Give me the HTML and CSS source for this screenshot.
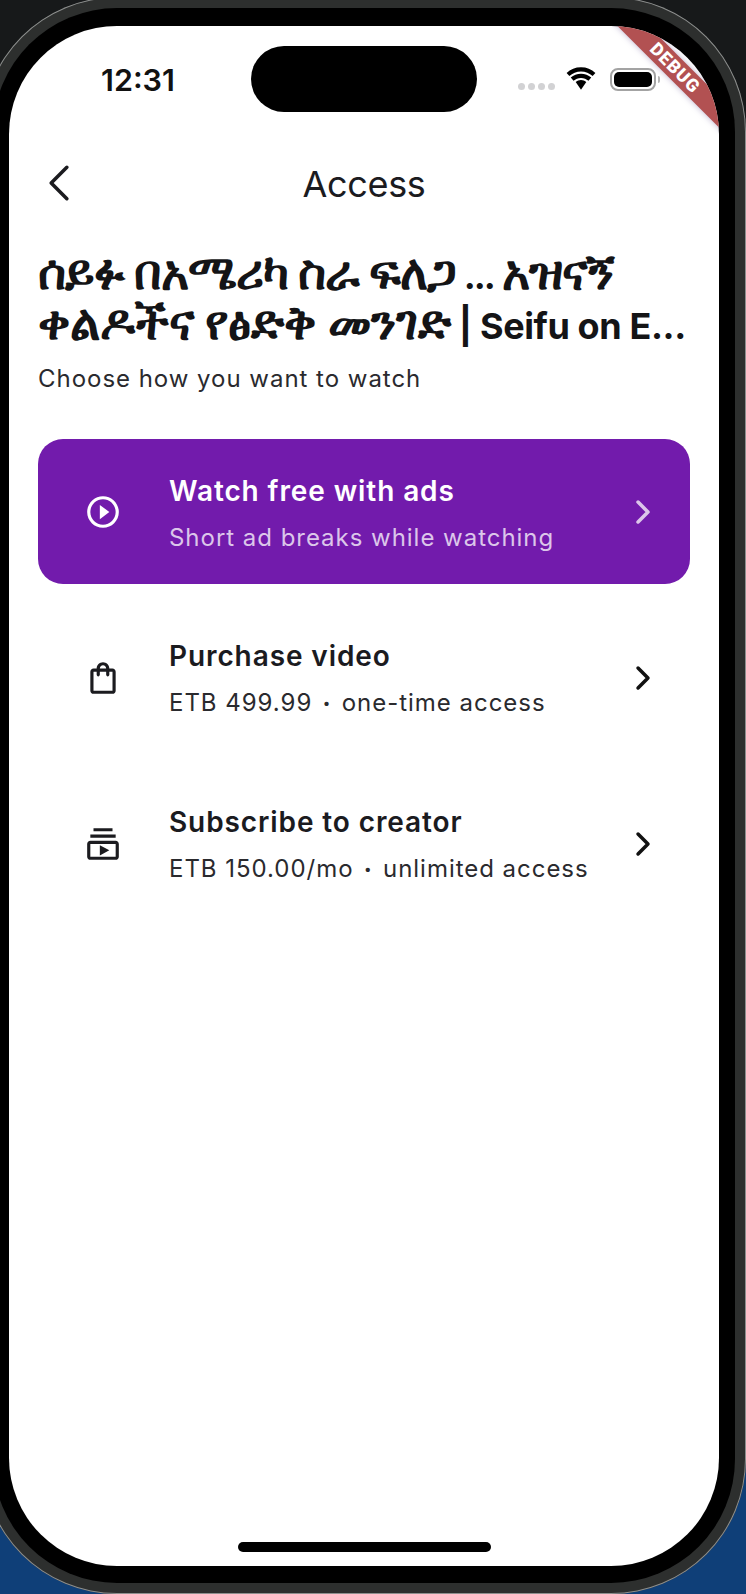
FILE: index.html
```html
<!DOCTYPE html>
<html lang="en">
<head>
  <meta charset="UTF-8">
  <meta name="viewport" content="width=device-width, initial-scale=1.0">
  <title>Access</title>
  <link rel="stylesheet" href="styles.css">
</head>
<body>
  <div class="frame">
    <div class="bezel">
      <div class="screen">
        <div class="debug-banner">DEBUG</div>

        <div class="status-bar">
          <span class="time">12:31</span>
          <div class="island"></div>
          <div class="status-icons">
            <div class="signal"><i></i><i></i><i></i><i></i></div>
            <svg class="wifi" viewBox="0 0 30 24">
              <path d="M15 5c4.200 0 8 1.600 10.900 4.300l2.600-3C24.900 2.900 20.200 1 15 1S5.100 2.900 1.500 6.300l2.600 3C7 6.600 10.800 5 15 5z"/>
              <path d="M15 11c2.700 0 5.100 1 7 2.700l2.600-3C22 8.400 18.700 7 15 7s-7 1.400-9.600 3.700l2.600 3C9.900 12 12.300 11 15 11z"/>
              <path d="M15 13c-1.900 0-3.600.7-5 1.900l5 7.100 5-7.100c-1.400-1.200-3.100-1.900-5-1.900z"/>
            </svg>
            <div class="battery"><div class="battery-level"></div></div>
            <div class="battery-cap"></div>
          </div>
        </div>

        <div class="app-bar">
          <svg class="back" viewBox="0 0 22 36"><path d="M19 3L4 18l15 15"/></svg>
          <div class="app-title">Access</div>
        </div>

        <div class="content">
          <h1 class="video-title">
            <span class="line"><span class="ge">ሰይፉ በአሜሪካ ስራ ፍለጋ</span> <span class="dots">...</span> <span class="ge">አዝናኝ</span></span>
            <span class="line"><span class="ge wide">ቀልዶችና የፅድቅ መንገድ</span> | Seifu on E...</span>
          </h1>
          <p class="subtitle">Choose how you want to watch</p>

          <div class="options">
            <div class="option selected">
              <svg class="option-icon" viewBox="0 0 24 24"><path d="M10 16.500l6-4.500-6-4.500v9zM12 2C6.480 2 2 6.480 2 12s4.480 10 10 10 10-4.480 10-10S17.520 2 12 2zm0 18c-4.410 0-8-3.590-8-8s3.590-8 8-8 8 3.590 8 8-3.590 8-8 8z"/></svg>
              <div class="option-text">
                <div class="option-name">Watch free with ads</div>
                <div class="option-desc">Short ad breaks while watching</div>
              </div>
              <svg class="chevron" viewBox="0 0 24 24"><path d="M8.500 5L15.500 12l-7 7"/></svg>
            </div>

            <div class="option">
              <svg class="option-icon" viewBox="0 0 24 24"><path d="M18 6h-2c0-2.210-1.790-4-4-4S8 3.790 8 6H6c-1.100 0-2 .9-2 2v12c0 1.100.9 2 2 2h12c1.100 0 2-.9 2-2V8c0-1.100-.9-2-2-2zm-6-2c1.100 0 2 .9 2 2h-4c0-1.100.9-2 2-2zm6 16H6V8h2v2c0 .55.45 1 1 1s1-.45 1-1V8h4v2c0 .55.45 1 1 1s1-.45 1-1V8h2v12z"/></svg>
              <div class="option-text">
                <div class="option-name">Purchase video</div>
                <div class="option-desc">ETB 499.99 <span class="dot">•</span> one-time access</div>
              </div>
              <svg class="chevron" viewBox="0 0 24 24"><path d="M8.500 5L15.500 12l-7 7"/></svg>
            </div>

            <div class="option">
              <svg class="option-icon" viewBox="0 0 24 24"><path d="M4 6h16v2H4zm2-4h12v2H6zm14 8H4c-1.100 0-2 .9-2 2v8c0 1.100.9 2 2 2h16c1.100 0 2-.9 2-2v-8c0-1.100-.9-2-2-2zm0 10H4v-8h16v8zm-10-7.270v6.530L16 16z"/></svg>
              <div class="option-text">
                <div class="option-name">Subscribe to creator</div>
                <div class="option-desc">ETB 150.00/mo <span class="dot">•</span> unlimited access</div>
              </div>
              <svg class="chevron" viewBox="0 0 24 24"><path d="M8.500 5L15.500 12l-7 7"/></svg>
            </div>
          </div>
        </div>

        <div class="home-indicator"></div>
      </div>
    </div>
  </div>
</body>
</html>
```

FILE: styles.css
```css
html, body {
  margin: 0;
  height: 100%;
  overflow: hidden;
}
body {
  font-family: Inter, "Noto Sans", "DejaVu Sans", sans-serif;
  color: #1b1b1f;
  background: linear-gradient(180deg, #17191a 0%, #17191a 60%, #0f3f78 60%, #0f3f78 100%);
}
.frame {
  width: 764px;
  height: 1597px;
  margin-left: -18px;
  margin-top: -3px;
  box-sizing: border-box;
  padding: 11px;
  background: #2d2f2e;
  border-radius: 135px;
  box-shadow: inset 0 0 0 1px #8d8f8e;
}
.bezel {
  height: 100%;
  box-sizing: border-box;
  padding: 18px 16px 17px;
  background: #000;
  border-radius: 124px;
}
.screen {
  position: relative;
  height: 100%;
  display: flex;
  flex-direction: column;
  overflow: hidden;
  background: #fff;
  border-radius: 108px;
}

/* flutter debug ribbon */
.debug-banner {
  position: absolute;
  top: 31px;
  right: -56px;
  width: 200px;
  height: 22px;
  line-height: 22px;
  text-align: center;
  transform: rotate(45deg);
  background: #b25152;
  color: #fff;
  font-family: Roboto, sans-serif;
  font-weight: 900;
  font-size: 18px;
  letter-spacing: 1px;
  box-shadow: 0 0 6px rgba(70, 40, 120, 0.35);
}

.status-bar {
  display: flex;
  align-items: flex-start;
  height: 86px;
  padding-top: 20px;
  box-sizing: border-box;
  flex-shrink: 0;
}
.time {
  width: 242px;
  padding-left: 92px;
  box-sizing: border-box;
  margin-top: 17px;
  font-size: 30.5px;
  line-height: 34px;
  font-weight: 600;
  color: #111;
}
.island {
  width: 226px;
  height: 66px;
  background: #000;
  border-radius: 33px;
}
.status-icons {
  display: flex;
  align-items: center;
  margin-left: 41px;
  margin-top: 20px;
}
.signal {
  display: flex;
  gap: 3px;
  margin-top: 14px;
}
.signal i {
  width: 7px;
  height: 7px;
  border-radius: 50%;
  background: #d2d2d4;
}
.wifi {
  width: 32px;
  height: 26px;
  margin-left: 10px;
}
.battery {
  width: 46px;
  height: 23px;
  box-sizing: border-box;
  margin-left: 13px;
  padding: 2px;
  border: 2px solid #a3a3a3;
  border-radius: 8px;
}
.battery-level {
  height: 100%;
  background: #000;
  border-radius: 5px;
}
.battery-cap {
  width: 2px;
  height: 7px;
  margin-left: 2px;
  background: #b5b5b5;
  border-radius: 0 2px 2px 0;
}

.app-bar {
  position: relative;
  display: flex;
  align-items: center;
  justify-content: center;
  height: 70px;
  margin-top: 37px;
  flex-shrink: 0;
}
.back {
  position: absolute;
  left: 38px;
  top: 15px;
  width: 23px;
  height: 38px;
  fill: none;
  stroke: #1b1b1f;
  stroke-width: 3.4;
  stroke-linecap: round;
  stroke-linejoin: round;
}
.app-title {
  font-size: 36px;
  font-weight: 400;
  letter-spacing: -0.3px;
}

.content {
  padding: 0 29px;
}
.video-title {
  margin: 28px 0 0;
  font-size: 36px;
  line-height: 50px;
  font-weight: 700;
  letter-spacing: -0.4px;
  color: #141416;
}
.video-title .line {
  display: block;
  height: 50px;
  white-space: nowrap;
}
.video-title .ge {
  font-size: 48px;
  letter-spacing: -1.1px;
}
.video-title .ge.wide {
  letter-spacing: 0;
}
.video-title .dots {
  letter-spacing: -2px;
}
.subtitle {
  margin: 15px 0 0;
  font-size: 24px;
  line-height: 34px;
  letter-spacing: 0.97px;
  color: #2a2a2e;
}

.options {
  display: flex;
  flex-direction: column;
  gap: 21px;
  margin-top: 43px;
}
.option {
  display: flex;
  align-items: center;
  height: 145px;
  border-radius: 25px;
  padding: 0 30px 0 46px;
}
.option.selected {
  background: #721bac;
  color: #fff;
}
.option-icon {
  width: 38px;
  height: 38px;
  flex-shrink: 0;
  fill: currentColor;
}
.option-text {
  flex: 1;
  margin-left: 47px;
  padding-top: 4px;
}
.option-name {
  font-size: 28px;
  line-height: 36px;
  font-weight: 600;
  letter-spacing: 0.9px;
}
.option-desc {
  margin-top: 12px;
  font-size: 24px;
  line-height: 34px;
  letter-spacing: 0.97px;
  color: #2a2a2e;
}
.option-desc .dot {
  margin: 0 3px;
  font-family: Roboto, sans-serif;
  font-size: 21px;
}
.selected .option-desc {
  color: #dcc6ea;
}
.chevron {
  width: 34px;
  height: 34px;
  flex-shrink: 0;
  fill: none;
  stroke: #111;
  stroke-width: 2.5;
  stroke-linecap: round;
  stroke-linejoin: round;
}
.selected .chevron {
  stroke: #dcc6ea;
}

.home-indicator {
  width: 253px;
  height: 10px;
  margin: auto auto 14px;
  background: #000;
  border-radius: 5px;
}
```
